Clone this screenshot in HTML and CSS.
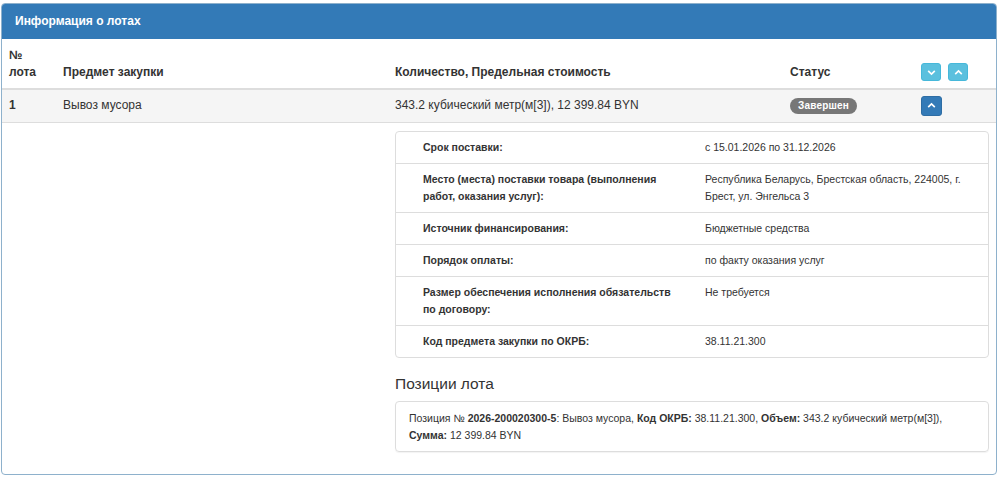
FILE: index.html
```html
<!DOCTYPE html>
<html lang="ru">
<head>
    <meta charset="UTF-8">
    <title>Информация о лотах</title>
    <link rel="stylesheet" href="styles.css">
</head>
<body>
    <div class="panel">
        <div class="panelHeading">Информация о лотах</div>
        <table class="lotsTable">
            <colgroup>
                <col class="colNum">
                <col class="colSubject">
                <col class="colAmount">
                <col class="colStatus">
                <col class="colActions">
            </colgroup>
            <thead>
                <tr>
                    <th>№<br>лота</th>
                    <th>Предмет закупки</th>
                    <th>Количество, Предельная стоимость</th>
                    <th>Статус</th>
                    <th>
                        <button class="btnXs btnInfo" title="Развернуть все">
                            <svg viewBox="0 0 10 10"><path d="M2 3.5 L5 6.5 L8 3.5"/></svg>
                        </button>
                        <button class="btnXs btnInfo" title="Свернуть все">
                            <svg viewBox="0 0 10 10"><path d="M2 6.5 L5 3.5 L8 6.5"/></svg>
                        </button>
                    </th>
                </tr>
            </thead>
            <tbody>
                <tr class="lotRow">
                    <td class="lotNum">1</td>
                    <td>Вывоз мусора</td>
                    <td>343.2 кубический метр(м[3]), 12 399.84 BYN</td>
                    <td><span class="label">Завершен</span></td>
                    <td>
                        <button class="btnXs btnPrimary" title="Свернуть">
                            <svg viewBox="0 0 10 10"><path d="M2 6.5 L5 3.5 L8 6.5"/></svg>
                        </button>
                    </td>
                </tr>
                <tr class="detailRow">
                    <td colspan="2"></td>
                    <td colspan="3">
                        <table class="detailTable">
                            <tr>
                                <th>Срок поставки:</th>
                                <td>с 15.01.2026 по 31.12.2026</td>
                            </tr>
                            <tr>
                                <th>Место (места) поставки товара (выполнения работ, оказания услуг):</th>
                                <td>Республика Беларусь, Брестская область, 224005, г. Брест, ул. Энгельса 3</td>
                            </tr>
                            <tr>
                                <th>Источник финансирования:</th>
                                <td>Бюджетные средства</td>
                            </tr>
                            <tr>
                                <th>Порядок оплаты:</th>
                                <td>по факту оказания услуг</td>
                            </tr>
                            <tr>
                                <th>Размер обеспечения исполнения обязательств по договору:</th>
                                <td>Не требуется</td>
                            </tr>
                            <tr>
                                <th>Код предмета закупки по ОКРБ:</th>
                                <td>38.11.21.300</td>
                            </tr>
                        </table>

                        <h4 class="positionsTitle">Позиции лота</h4>
                        <div class="positionItem">
                            Позиция № <b>2026-200020300-5</b>: Вывоз мусора, <b>Код ОКРБ:</b> 38.11.21.300, <b>Объем:</b> 343.2 кубический метр(м[3]),
                            <b>Сумма:</b> 12 399.84 BYN
                        </div>
                    </td>
                </tr>
            </tbody>
        </table>
    </div>
</body>
</html>
```

FILE: styles.css
```css
body {
    font-family: 'Liberation Sans', Arial, sans-serif;
    font-size: 12px;
    line-height: 17px;
    color: #333;
    background: #fff;
    margin: 0;
    padding: 3px 3px 0 1px;
}
.panel {
    border: 1px solid #8eb1cc;
    border-radius: 4px;
    overflow: hidden;
    background: #fff;
    height: 472px;
    box-sizing: border-box;
}
.panelHeading {
    background: #337ab7;
    color: #fff;
    font-weight: bold;
    font-size: 12px;
    height: 35px;
    line-height: 35px;
    padding: 0 13px;
}
.lotsTable {
    width: 100%;
    border-collapse: collapse;
    table-layout: fixed;
}
.colNum { width: 54px; }
.colSubject { width: 332px; }
.colAmount { width: 395px; }
.colStatus { width: 131px; }
.lotsTable > thead > tr > th {
    text-align: left;
    vertical-align: bottom;
    padding: 8px 7px 7px 7px;
    border-bottom: 2px solid #ddd;
    font-weight: bold;
}
.lotsTable > tbody > tr > td {
    padding: 8px 7px;
    vertical-align: top;
    border-top: 1px solid #ddd;
}
.lotRow {
    background: #f5f5f5;
    height: 33px;
}
.lotsTable > tbody > tr.lotRow > td {
    border-top: none;
    padding: 0 7px;
    vertical-align: middle;
}
.lotNum {
    font-weight: bold;
}
.detailRow > td {
    padding-bottom: 23px !important;
}
.label {
    display: inline-block;
    background: #777;
    color: #fff;
    font-size: 10px;
    font-weight: bold;
    line-height: 16px;
    padding: 0 8px;
    border-radius: 8px;
    vertical-align: middle;
    letter-spacing: 0.2px;
}
.btnXs {
    display: inline-flex;
    align-items: center;
    justify-content: center;
    width: 20px;
    height: 18px;
    padding: 0;
    margin-right: 4px;
    border: 1px solid transparent;
    border-radius: 3px;
    cursor: pointer;
    vertical-align: middle;
}
.btnXs svg {
    width: 11px;
    height: 11px;
    fill: none;
    stroke: #fff;
    stroke-width: 1.5;
}
.btnInfo {
    background: #5bc0de;
    border-color: #46b8da;
}
.btnPrimary {
    background: #337ab7;
    border-color: #2e6da4;
    height: 20px;
    width: 21px;
}
.detailTable {
    width: 100%;
    border-collapse: separate;
    border-spacing: 0;
    border: 1px solid #ddd;
    border-radius: 4px;
    font-size: 10.5px;
    line-height: 17px;
}
.detailTable th,
.detailTable td {
    text-align: left;
    vertical-align: top;
    padding: 7px 8px;
    border-top: 1px solid #ddd;
}
.detailTable tr:first-child th,
.detailTable tr:first-child td {
    border-top: none;
}
.detailTable th {
    width: 250px;
    padding-left: 27px;
    padding-right: 24px;
    font-weight: bold;
}
.positionsTitle {
    font-size: 15.5px;
    font-weight: normal;
    line-height: 18px;
    margin: 17px 0 8px 0;
}
.positionItem {
    border: 1px solid #ddd;
    border-radius: 4px;
    padding: 8px 13px 7px 13px;
    font-size: 10.5px;
    line-height: 17px;
    box-shadow: 0 1px 1px rgba(0, 0, 0, 0.05);
}
```
